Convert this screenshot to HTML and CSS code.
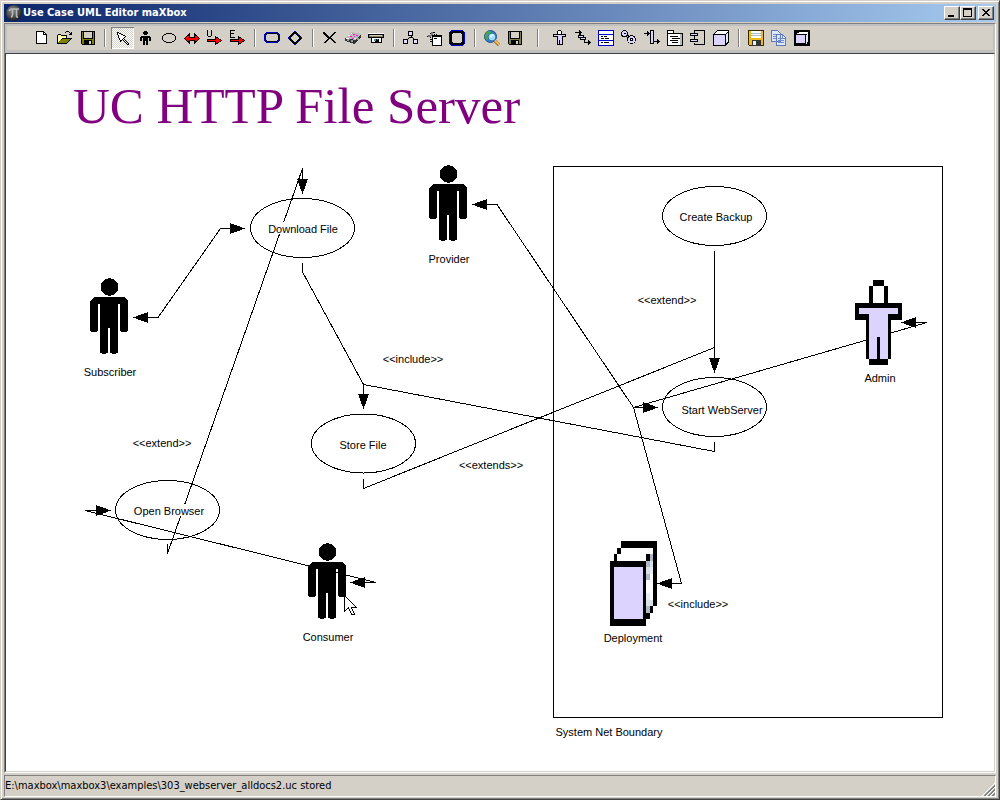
FILE: index.html
```html
<!DOCTYPE html>
<html lang="en">
<head>
<meta charset="utf-8">
<title>Use Case UML Editor maXbox</title>
<link rel="stylesheet" href="styles.css">
</head>
<body>
<div class="window">
  <header class="titlebar">
    <svg class="app-icon" width="16" height="16" viewBox="0 0 16 16" aria-hidden="true">
      <defs><radialGradient id="ball" cx=".4" cy=".35" r=".7"><stop offset="0" stop-color="#8a8a8a"/><stop offset=".6" stop-color="#4a4a4a"/><stop offset="1" stop-color="#161616"/></radialGradient></defs>
      <circle cx="8" cy="8" r="7.8" fill="url(#ball)"/>
      <path d="M3 6q1-2 3-2h7M6.500 4.500v5q0 2-1.500 2.500M10.500 4.500v6q0 2 1.500 1.500" fill="none" stroke="#b8b8b8" stroke-width="1.600"/>
    </svg>
    <span class="title">Use Case UML Editor maXbox</span>
    <div class="controls">
      <button class="ctl" aria-label="Minimize"><svg width="14" height="12" viewBox="0 0 14 12"><path d="M3 8h6v2H3z"/></svg></button>
      <button class="ctl" aria-label="Maximize"><svg width="14" height="12" viewBox="0 0 14 12"><path fill-rule="evenodd" d="M2 1h9v9H2zM3 3v6h7V3z"/></svg></button>
      <button class="ctl close" aria-label="Close"><svg width="14" height="12" viewBox="0 0 14 12"><path d="M3 2h2v1h1v1h2V3h1V2h2v1h-1v1H9v1H8v1h1v1h1v1h1v1H9V8H8V7H6v1H5v1H3V8h1V7h1V6h1V5H5V4H4V3H3z"/></svg></button>
    </div>
  </header>

  <main class="client">
  <nav class="toolbar" aria-label="Tools">
    <button class="tool" aria-label="New"><svg viewBox="0 0 17 16"><path d="M3 1h8v1h1v1h1v1h1v10H3z"/><path fill="#fff" d="M4 2h6v3h3v8H4z"/><path fill="#fff" d="M11 3h1v1h-1z"/></svg></button>
    <button class="tool" aria-label="Open"><svg viewBox="0 0 17 16"><path d="M1 5h1V4h3v1h6v3h5v1h-1v1h-1v1h-1v1h-1v1h-1v1H1z"/><path fill="#ffffb0" d="M2 5h3v1h5v2H6v1H5v1H4v1H3v1H2z"/><path fill="#808000" d="M6 9h8v1h-1v1h-1v1h-1v1H2v-1h1v-1h1v-1h2z"/><path d="M9 2h1V1h3v1h-3v1H9zM13 2h1v1h1V2h1v3h-3V4h1V3h-1z"/></svg></button>
    <button class="tool" aria-label="Save"><svg viewBox="0 0 17 16"><path d="M2 1h14v14H3v-1H2z"/><path fill="#808000" d="M3 2h1v7h10V2h1v12h-2v-4H5v4H3z"/><path fill="#d4d0c8" d="M5 2h8v6H5zM10 11h2v3h-2z"/></svg></button>
    <span class="sep"></span>
    <button class="tool pressed" aria-label="Select" aria-pressed="true"><svg viewBox="0 0 17 16"><path d="M3 2h2v1h2v1h2v1h2v1h1v1h-1v1h-1v1h1v1h1v1h1v1h1v1h1v2h-2v-1h-1v-1h-1v-1h-1v-1H9v-1H8v1H7v1H6v-2H5V8H4V5H3z"/><path fill="#fff" d="M4 3h1v1h2v1h2v1h2v1h-1v1H9v1h1v1h1v1h1v1h1v1h1v1h-1v-1h-1v-1h-1v-1h-1v-1H9V9H8v1H6V8H5V5H4z"/></svg></button>
    <button class="tool" aria-label="Actor"><svg viewBox="0 0 17 16"><path d="M7 1h3v1h1v2h-1v1H7V4H6V2h1zM4 6h9v1h1v4h-2V8h-1v7H9v-4H8v4H6V8H5v3H3V7h1z"/></svg></button>
    <button class="tool" aria-label="Use case"><svg viewBox="0 0 17 16"><ellipse cx="9" cy="8" rx="6.500" ry="4.500" fill="none" stroke="#000"/></svg></button>
    <button class="tool" aria-label="Association"><svg viewBox="0 0 17 16"><path fill="#f00" stroke="#000" d="M1.500 8.500 6.500 4v3h5V4l5 4.500-5 4.500v-3h-5v3z"/></svg></button>
    <button class="tool" aria-label="Uses"><svg viewBox="0 0 17 16"><path d="M1 0h1v6h3V0h1v6H5v1H2V6H1z"/><path fill="#f00" stroke="#000" d="M1.500 9.500h8v-3l6 4-6 4v-3h-8z"/></svg></button>
    <button class="tool" aria-label="Extends"><svg viewBox="0 0 17 16"><path d="M1 0h5v1H2v2h3v1H2v3h4v1H1z"/><path fill="#f00" stroke="#000" d="M1.500 9.500h8v-3l6 4-6 4v-3h-8z"/></svg></button>
    <span class="sep"></span>
    <button class="tool" aria-label="Rounded box"><svg viewBox="0 0 17 16"><path fill="#0000c8" fill-rule="evenodd" d="M2 2h12v1h1v1h1v7h-1v1h-1v1H2v-1H1v-1H0V4h1V3h1zM3 4v1H2v5h1v1h10v-1h1V5h-1V4z"/><path d="M3 3h10v1H3zM3 11h10v1H3zM1 5h1v5H1zM14 5h1v5h-1zM2 4h1v1H2zM13 4h1v1h-1zM2 10h1v1H2zM13 10h1v1h-1z"/></svg></button>
    <button class="tool" aria-label="Decision"><svg viewBox="0 0 17 16"><path d="M8 2 14 8 8 14 2 8z" fill="none" stroke="#000" stroke-width="2"/><path fill="#0000d0" d="M7 1h2v1H7zM4 4h1v1H4zM11 4h1v1h-1zM1 7h1v2H1zM14 7h1v2h-1zM4 11h1v1H4zM11 11h1v1h-1zM7 14h2v1H7z"/></svg></button>
    <span class="sep"></span>
    <button class="tool" aria-label="Delete"><svg viewBox="0 0 17 16"><path d="M1 2h2v1h1v1h1v1h1v1h1v1h1V6h1V5h1V4h1V3h1V2h2v1h-1v1h-1v1h-1v1h-1v1H9v1h1v1h1v1h1v1h1v1h1v1h-2v-1h-1v-1h-1v-1H9v-1H8V9H7v1H6v1H5v1H4v1H2v-1h1v-1h1v-1h1V9h1V8H5V7H4V6H3V5H2V4H1z"/></svg></button>
    <button class="tool" aria-label="Erase"><svg viewBox="0 0 17 16"><path fill="#b8b8b8" d="m0 8 7-6 9 2-6 6z"/><path fill="#333" d="M0 8 10 10v4L0 11zM10 10l6-6v3l-6 7z"/><path fill="#999" d="M2 9h2v2H2zM6 10h2v2H6zM12 8h2v2h-2z"/><path fill="#fff" d="M3 5h2v1H3zM1 8h3v1H1zM6 3h1v1H6zM9 8h2v1H9z"/><path fill="#f020d0" d="M5 6h2v1H5zM8 4h2v1H8zM11 5h2v1h-2zM7 8h2v1H7zM4 9h1v1H4zM9 6h1v1H9z"/></svg></button>
    <button class="tool" aria-label="Print"><svg viewBox="0 0 17 16"><path fill="#fff" d="M0 3h16v5h-2v5H3V8H0z"/><path d="M0 4h16v4h-2v5H3V8H0z"/><path fill="#808060" d="M1 5h14v2H1z"/><path fill="#d4d0c8" d="M2 5h12v1H2z"/><path fill="#fff" d="M4 8h9v4H4z"/><path d="M7 9h4v3H7z"/><path fill="#2aa" d="M6 9h2v2H6z"/><path fill="#d33" d="M9 9h1v1H9z"/></svg></button>
    <span class="sep"></span>
    <button class="tool" aria-label="Hierarchy"><svg viewBox="0 0 17 16"><path fill="none" stroke="#000" d="M8 5v2L3 10M8 7l5 3"/><path fill="#e4dcff" stroke="#000" d="M5.500 1.500h4v4h-4zM.5 9.500h4v4h-4zM10.500 9.500h4v4h-4z"/></svg></button>
    <button class="tool" aria-label="Drag page"><svg viewBox="0 0 17 16"><path fill="none" stroke="#000" stroke-dasharray="1 1" d="M1 7 6 2l6 4M2 6h6M4 3v5M8 2v4"/><path fill="#777" d="M5 2h2v4H5zM2 5h3v2H2z"/><path d="M6 5h10v11H6v-4H4v-1h2zM4 9h2v1H4z"/><path fill="#fff" d="M7 7h8v8H7z"/><path d="M8 8h3v1H8z"/></svg></button>
    <button class="tool" aria-label="State"><svg viewBox="0 0 17 16"><path fill-rule="evenodd" d="M2 0h12v1h1v1h1v12h-1v1h-1v1H2v-1H1v-1H0V2h1V1h1zM4 3v1H3v8h1v1h8v-1h1V4h-1V3z"/><path fill="#0000d8" d="M2 0h12v1H2zM0 2h1v12H0zM15 2h1v12h-1zM2 15h12v1H2zM1 1h1v1H1zM14 1h1v1h-1zM1 14h1v1H1zM14 14h1v1h-1z"/></svg></button>
    <span class="sep"></span>
    <button class="tool" aria-label="Find"><svg class="smooth" viewBox="0 0 17 16"><circle cx="6.500" cy="6.500" r="6" fill="#2f7fd0" stroke="#24508a"/><path fill="#48a848" d="M1 5q1-4 5-4l2 2-3 2v3l-2 2Q1 9 1 5z"/><circle cx="8" cy="7" r="4" fill="#9fdcf8" stroke="#316aa8"/><path fill="#e4f8ff" d="M6 6q1-2 3-2l1 2q-3 0-4 2z"/><path d="m11 11 4 4" stroke="#a06820" stroke-width="3.200"/><path d="m11 10.500 4 4" stroke="#f7ba58" stroke-width="1.800"/></svg></button>
    <button class="tool" aria-label="Save model"><svg viewBox="0 0 17 16"><path d="M1 1h14v14H2v-1H1z"/><path fill="#808040" d="M2 2h1v7h10V2h1v12h-2v-4H4v4H2z"/><path fill="#d4d0c8" d="M4 2h8v6H4zM9 11h2v3H9z"/></svg></button>
    <span class="sep wide"></span>
    <button class="tool" aria-label="Business actor"><svg viewBox="0 0 17 16"><path d="M6 0h3v1h1v3h4v3h-3v8H5V7H1V4h4V1h1z"/><path fill="#fff" d="M6 1h3v3H6z"/><path fill="#dcd4ff" d="M2 5h11v1h-3v8H8v-4H7v4H6V6H2z"/></svg></button>
    <button class="tool" aria-label="Sequence"><svg viewBox="0 0 17 16"><path d="M0 2h4V0h1v1h1v1h1v1H6v1H5v1H4V3H0zM5 4h1v2H5zM9 10h1v2h3v-2h1v1h1v1h1v1h-1v1h-1v1h-1v-2H9z"/><path fill="#dcd4ff" stroke="#000" d="M3.500 5.500h5v2h-5zM5.500 7.500h5v2h-5z"/></svg></button>
    <button class="tool" aria-label="Class"><svg viewBox="0 0 17 16"><path fill="#0000c8" d="M0 0h16v16H0z"/><path fill="#fff" d="M1 1h14v3H1zM1 5h14v5H1zM1 11h14v4H1z"/><path d="M3 6h2v1H3zM6 6h3v1H6zM3 8h3v1H3zM7 8h4v1H7zM3 12h2v1H3zM6 12h5v1H6z"/></svg></button>
    <button class="tool" aria-label="Collaboration"><svg viewBox="0 0 17 16"><circle cx="3.500" cy="3.500" r="3" fill="#dcd4ff" stroke="#000"/><circle cx="10.500" cy="9.500" r="4" fill="#dcd4ff" stroke="#000"/><path d="M3 3h2v1H3zM9 8h3v3H9zM7 5h1v1H7z"/><path fill="#fff" d="M10 9h1v1h-1z"/></svg></button>
    <button class="tool" aria-label="Transition"><svg viewBox="0 0 17 16"><path d="M0 3h3V1h1v1h1v1h1v1H5v1H4v1H3V4H0zM10 11h3V9h1v1h1v1h1v1h-1v1h-1v1h-1v-2h-3z"/><path fill="#dcd4ff" stroke="#000" d="M6.500.5h3v13h-3z"/></svg></button>
    <button class="tool" aria-label="Package"><svg viewBox="0 0 17 16"><path d="M0 0h7v3h9v13H0z"/><path fill="#fff" d="M1 1h5v2H1zM1 4h14v11H1z"/><path d="M3 6h8v1H3zM5 8h8v1H5zM3 10h8v1H3zM5 12h6v1H5z"/><path fill="#bbb" d="M13 4h2v11h-2z"/></svg></button>
    <button class="tool" aria-label="Component"><svg viewBox="0 0 17 16"><path fill="none" stroke="#000" d="M4.500 3V.5h10v14h-10V13M4.500 6v4"/><path fill="#dcd4ff" stroke="#000" d="M.5 3.500h7v2h-7zM.5 9.500h7v2h-7z"/></svg></button>
    <button class="tool" aria-label="Node"><svg viewBox="0 0 17 16"><path d="M4 0h12v13h-1v1h-1v1h-1v1H0V4h1V3h1V2h1V1h1z"/><path fill="#fff" d="M4 1h11v1h-1v1h-1v1H2V3h1V2h1z"/><path fill="#dcd4ff" d="M1 5h11v10H1z"/><path fill="#e4ecf0" d="M13 4h1V3h1v9h-1v1h-1z"/></svg></button>
    <span class="sep"></span>
    <button class="tool" aria-label="Save diagram"><svg viewBox="0 0 17 16"><path fill="#332800" d="M0 0h16v16H1v-1H0z"/><path fill="#f0b818" d="M1 1h14v14H1z"/><path fill="#fff" d="M3 1h10v7H3z"/><path fill="#b0b8c0" d="M3 3h10v1H3zM3 5h10v1H3z"/><path fill="#333" d="M4 10h9v6H4z"/><path fill="#eee" d="M5 11h3v4H5z"/></svg></button>
    <button class="tool" aria-label="Copy"><svg viewBox="0 0 17 16"><path fill="#dce8fc" stroke="#6078b8" d="M.5.5h6l3 3v8h-9zM5.500 4.500h6l3 3v8h-9z"/><path fill="#6c8ccc" d="M2 4h3v1H2zM2 6h3v1H2zM2 8h3v1H2zM7 8h4v1H7zM7 10h6v1H7zM7 12h6v1H7zM11 5h1v3h2v1h-3z"/></svg></button>
    <button class="tool" aria-label="Deployment"><svg viewBox="0 0 17 16"><path d="M0 0h16v16H0z"/><path fill="#fff" d="M5 2h9v1h-1v1H3V3h2z"/><path fill="#dcd4ff" d="M2 5h9v8H2z"/><path fill="#e4ecf0" d="M12 5h1V3h1v9h-1v2h-1z"/></svg></button>
  </nav>

  <section class="canvas" aria-label="Diagram">
    <svg class="diagram" role="img" aria-label="Use case diagram">
      <defs>
        <g id="person"><circle cx="19.500" cy="9" r="8.800"/><path d="M4 19h30l4 4v29q0 2-4 2t-4-2V26h-2v47q0 3-4 3t-4-3V50h-2v23q0 3-4 3t-4-3V26H8v26q0 2-4 2t-4-2V23z"/></g>
        <path id="head" d="M0 0-15-5.500v11z"/>
      </defs>
      <g transform="translate(-6 -54)">
        <path class="line" d="M553.500 166.500h389v551h-389z"/>
        <g class="line">
          <ellipse cx="302.500" cy="228" rx="52" ry="29.500"/>
          <ellipse cx="363.500" cy="443.500" rx="52" ry="29.500"/>
          <ellipse cx="714.500" cy="216" rx="52" ry="29.500"/>
          <ellipse cx="714.500" cy="407" rx="52" ry="29.500"/>
          <ellipse cx="167.500" cy="510" rx="52" ry="29.500"/>
          <path d="M134 317.500h24L220.500 228.500H245"/>
          <path d="M302.500 194V168.500L167.500 553.500V544"/>
          <path d="M302.500 263v9L363.500 384.500V409M363.500 384.500 714.500 451.500V442"/>
          <path d="M363.500 479v9.500L714.500 347.500M714.500 251v120"/>
          <path d="M472 204.500h25L633.500 407.500 681.500 583.500H657M658 407.500H633.500L927 322.500H901"/>
          <path d="M111 510.500H85L376 582.500H351"/>
        </g>
        <g>
          <use href="#head" transform="translate(245 228.500)"/>
          <use href="#head" transform="translate(133 317.500) rotate(180)"/>
          <use href="#head" transform="translate(302.500 194) rotate(90)"/>
          <use href="#head" transform="translate(363.500 409) rotate(90)"/>
          <use href="#head" transform="translate(714.500 373) rotate(90)"/>
          <use href="#head" transform="translate(658 407.500)"/>
          <use href="#head" transform="translate(472 204.500) rotate(180)"/>
          <use href="#head" transform="translate(657 583.500) rotate(180)"/>
          <use href="#head" transform="translate(901 322.500) rotate(180)"/>
          <use href="#head" transform="translate(111 510.500)"/>
          <use href="#head" transform="translate(350 582.500) rotate(180)"/>
        </g>
        <use href="#person" x="90" y="278"/>
        <use href="#person" x="429" y="165"/>
        <use href="#person" x="308" y="543"/>

        <path d="M873 280h11v6h4v17h14v17h-11v39h-3v6h-19v-6h-3v-39h-11v-17h14v-17h4z"/>
        <path fill="#fff" d="M873 286h11v17h-11z"/>
        <path class="lilac" d="M859 308h39v6h-10v45h-8v-22h-3v22h-8v-45h-10z"/>

        <path d="M621 541h36v65h-4v7h-3v6h-4v7h-36v-65h4v-7h3v-6h4z"/>
        <path fill="#fff" d="M621 548h32v6h-7v7h-29v-7h4z"/>
        <path class="lilac" d="M614 567h29v52h-29z"/>
        <path fill="#b0b8c8" d="M650 554h3v52h-3v7h-4v-52h4z"/>
        <path fill="#d8e0e8" d="M650 561h3v6h-3zM646 567h4v7h-4zM646 600h7v6h-7z"/>
        <path fill="#fff" d="M650 574h3v26h-3zM646 580h4v13h-4z"/>
        <path fill="#e8ecf4" d="M650 567h3v7h-3zM646 593h4v7h-4z"/>

        <path fill="#fff" d="M268 222h70v12h-70zM134 504h70v12h-70z"/>
        <g class="label">
          <text x="303" y="233">Download File</text>
          <text x="363" y="449">Store File</text>
          <text x="716" y="221">Create Backup</text>
          <text x="722" y="414">Start WebServer</text>
          <text x="169" y="515">Open Browser</text>
          <text x="110" y="376">Subscriber</text>
          <text x="449" y="263">Provider</text>
          <text x="328" y="641">Consumer</text>
          <text x="880" y="382">Admin</text>
          <text x="633" y="642">Deployment</text>
          <text x="609" y="736">System Net Boundary</text>
          <text x="667" y="304">&lt;&lt;extend&gt;&gt;</text>
          <text x="413" y="363">&lt;&lt;include&gt;&gt;</text>
          <text x="162" y="447">&lt;&lt;extend&gt;&gt;</text>
          <text x="491" y="469">&lt;&lt;extends&gt;&gt;</text>
          <text x="698" y="608">&lt;&lt;include&gt;&gt;</text>
        </g>
        <path fill="#fff" stroke="#000" d="M344.500 595.500v16l4-4 3 7h3l-3-7h5z"/>
      </g>
    </svg>
    <h1 class="heading">UC HTTP File Server</h1>
  </section>
  </main>

  <footer class="status">
    <span>E:\maxbox\maxbox3\examples\303_webserver_alldocs2.uc stored</span>
    <svg class="grip" width="13" height="13" viewBox="0 0 13 13" aria-hidden="true"><path d="M0 13 13 0M4 13l9-9M8 13l5-5" stroke="#fff"/><path d="M2 13 13 2M3 13 13 3M6 13l7-7M7 13l6-6M10 13l3-3M11 13l2-2" stroke="#808080"/></svg>
  </footer>
</div>
</body>
</html>
```
FILE: styles.css
```css
* { box-sizing: border-box; }

body { margin: 0; background: #d4d0c8; }

.window {
  display: flex;
  flex-direction: column;
  height: 100vh;
  padding: 3px 2px 2px;
  background: #d4d0c8;
  border: 1px solid #404040;
  border-top-color: #d4d0c8;
  border-left-color: #d4d0c8;
  box-shadow: inset 1px 1px #fff, inset -1px -1px #808080;
}

.titlebar {
  display: flex;
  align-items: center;
  height: 18px;
  flex: none;
  margin: 0 1px;
  padding: 0 2px;
  background: linear-gradient(90deg, #0a246a, #a6caf0);
}

.app-icon { flex: none; }

.title {
  flex: 1;
  padding-left: 1px;
  color: #fff;
  font: bold 11px/18px "DejaVu Sans Condensed", "DejaVu Sans", sans-serif;
  white-space: nowrap;
}

.controls { display: flex; }

.ctl {
  width: 16px;
  height: 14px;
  padding: 0;
  border: 1px solid #404040;
  border-top-color: #fff;
  border-left-color: #fff;
  background: #d4d0c8;
  box-shadow: inset -1px -1px #808080;
}
.ctl svg { display: block; shape-rendering: crispEdges; }
.close { margin-left: 2px; }

.client {
  display: flex;
  flex-direction: column;
  flex: 1;
  min-height: 0;
  margin: 1px 1px 0;
  border: 1px solid #808080;
  border-right-color: #fff;
  border-bottom-color: #fff;
}

.toolbar {
  display: flex;
  flex: none;
  align-items: center;
  height: 29px;
  padding: 0 23px;
  background: #d4d0c8;
  border: 2px solid #c0c0c0;
  border-bottom-width: 3px;
  box-shadow: 0 1px #808080;
}

.tool {
  display: flex;
  align-items: center;
  justify-content: center;
  width: 23px;
  height: 22px;
  padding: 0;
  border: 0;
  background: none;
}
.tool svg { width: 17px; height: 16px; flex: none; shape-rendering: crispEdges; }
.tool .smooth { shape-rendering: auto; }

.pressed {
  background: repeating-conic-gradient(#fff 0 25%, #d4d0c8 0 50%) 0 0 / 2px 2px;
  box-shadow: inset 1px 1px #808080, inset -1px -1px #fff;
}

.sep {
  width: 12px;
  height: 18px;
  background: linear-gradient(90deg, #808080 50%, #fff 50%) center / 2px 100% no-repeat;
}
.wide { width: 22px; }

.canvas {
  position: relative;
  flex: 1;
  min-height: 0;
  overflow: hidden;
  background: #fff;
  border: 1px solid #404040;
  border-right-color: #d4d0c8;
  border-bottom-color: #d4d0c8;
}

.diagram {
  position: absolute;
  inset: 0;
  width: 100%;
  height: 100%;
  shape-rendering: crispEdges;
}

.line { fill: none; stroke: #000; stroke-width: 1px; }
.lilac { fill: #dcd4ff; }
.label {
  font: 11px "Liberation Sans", Arial, sans-serif;
  text-anchor: middle;
}

.heading {
  position: relative;
  margin: 0;
  padding: 20px 67px;
  color: #800080;
  font: 51px/64px "Palatino Linotype", Palatino, "Liberation Serif", serif;
  white-space: nowrap;
}

.status {
  display: flex;
  align-items: flex-end;
  justify-content: space-between;
  flex: none;
  height: 22px;
  margin: 2px 1px 0;
  border: 1px solid #808080;
  border-right-color: #fff;
  border-bottom-color: #fff;
  font: 11px/20px "DejaVu Sans Condensed", "DejaVu Sans", sans-serif;
  white-space: nowrap;
}
.grip { flex: none; }
```
